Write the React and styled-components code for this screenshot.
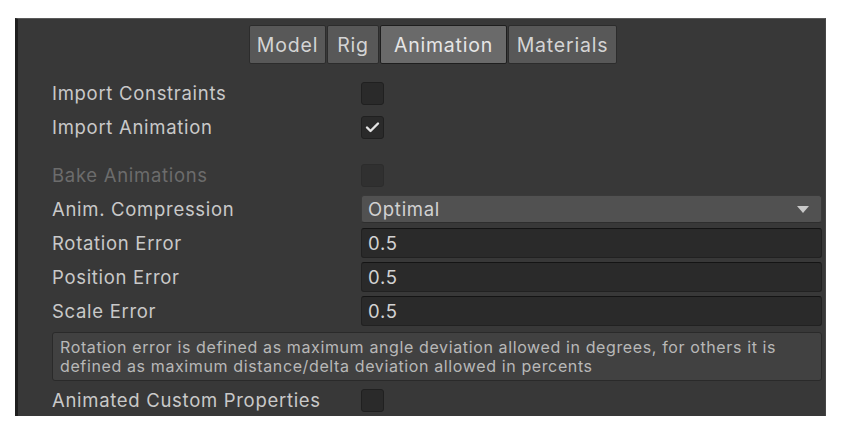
import React from 'react';
import styled, { createGlobalStyle } from 'styled-components';

const GlobalStyle = createGlobalStyle`
  html, body {
    margin: 0;
    padding: 0;
    background: #ffffff;
  }
  body {
    font-family: Inter, "Noto Sans", sans-serif;
  }
`;

const Panel = styled.div`
  box-sizing: border-box;
  margin: 18px 0 0 15px;
  width: 811px;
  height: 398px;
  background: #383838;
  border-top: 1px solid #5a5a5a;
  border-left: 3px solid #1f1f1f;
  border-right: 1px solid #464646;
  overflow: hidden;
  display: flex;
  flex-direction: column;
`;

const TabBar = styled.div`
  display: flex;
  margin: 6px 0 12px 231px;
`;

const Tab = styled.div`
  box-sizing: border-box;
  height: 39px;
  width: ${(p) => p.w}px;
  display: flex;
  align-items: center;
  justify-content: center;
  font-size: 19.5px;
  letter-spacing: 0.8px;
  color: ${(p) => (p.active ? '#e6e6e6' : '#d4d4d4')};
  background: ${(p) => (p.active ? '#6a6a6a' : '#585858')};
  border: 1px solid ${(p) => (p.active ? '#1e1e1e' : '#2c2c2c')};
  margin-right: 1px;
  border-radius: 2px;
`;

const Form = styled.div`
  display: flex;
  flex-direction: column;
  padding: 0 3px 0 34px;
`;

const Row = styled.div`
  display: grid;
  grid-template-columns: 309px 1fr;
  align-items: center;
  height: 34px;
`;

const Spacer = styled.div`
  height: 14px;
`;

const Label = styled.div`
  font-size: 18.5px;
  letter-spacing: 0.7px;
  color: ${(p) => (p.disabled ? '#6c6c6c' : '#c9c9c9')};
  white-space: nowrap;
`;

const Box = styled.div`
  box-sizing: border-box;
  width: 23px;
  height: 23px;
  border-radius: 3px;
  background: ${(p) => (p.disabled ? '#303030' : '#2a2a2a')};
  border: 1px solid ${(p) => (p.disabled ? '#2c2c2c' : '#202020')};
  display: flex;
  align-items: center;
  justify-content: center;
`;

const Dropdown = styled.div`
  box-sizing: border-box;
  height: 28px;
  border-radius: 3px;
  background: #515151;
  border: 1px solid #3a3a3a;
  border-bottom-color: #2e2e2e;
  display: flex;
  align-items: center;
  justify-content: space-between;
  padding: 0 12px 0 6px;
  font-size: 18.5px;
  letter-spacing: 0.7px;
  color: #d2d2d2;
`;

const Arrow = styled.span`
  width: 0;
  height: 0;
  border-left: 6px solid transparent;
  border-right: 6px solid transparent;
  border-top: 7px solid #c8c8c8;
`;

const Input = styled.div`
  box-sizing: border-box;
  height: 30px;
  border-radius: 3px;
  background: #2a2a2a;
  border: 1px solid #212121;
  border-top-color: #141414;
  display: flex;
  align-items: center;
  padding: 0 6px;
  font-size: 18.5px;
  letter-spacing: 0.7px;
  color: #d2d2d2;
`;

const HelpBox = styled.div`
  box-sizing: border-box;
  margin-top: 4px;
  height: 49px;
  border-radius: 3px;
  background: #414141;
  border: 1px solid #2a2a2a;
  padding: 5px 7px 0;
  font-size: 16px;
  letter-spacing: 0.62px;
  line-height: 19px;
  color: #b8b8b8;
`;

const LastRow = styled(Row)`
  margin-top: 2px;
`;

function Check({ checked, disabled }) {
  return (
    <Box disabled={disabled}>
      {checked && (
        <svg width="15" height="12" viewBox="0 0 15 12">
          <path d="M2 6.5 L5.5 10 L13 2.5" fill="none" stroke="#e4e4e4" strokeWidth="2.4" strokeLinecap="round" strokeLinejoin="round" />
        </svg>
      )}
    </Box>
  );
}

export default function App() {
  return (
    <>
      <GlobalStyle />
      <Panel>
        <TabBar>
          <Tab w={77}>Model</Tab>
          <Tab w={52}>Rig</Tab>
          <Tab w={127} active>Animation</Tab>
          <Tab w={109}>Materials</Tab>
        </TabBar>
        <Form>
          <Row>
            <Label>Import Constraints</Label>
            <Check />
          </Row>
          <Row>
            <Label>Import Animation</Label>
            <Check checked />
          </Row>
          <Spacer />
          <Row>
            <Label disabled>Bake Animations</Label>
            <Check disabled />
          </Row>
          <Row>
            <Label>Anim. Compression</Label>
            <Dropdown>
              <span>Optimal</span>
              <Arrow />
            </Dropdown>
          </Row>
          <Row>
            <Label>Rotation Error</Label>
            <Input>0.5</Input>
          </Row>
          <Row>
            <Label>Position Error</Label>
            <Input>0.5</Input>
          </Row>
          <Row>
            <Label>Scale Error</Label>
            <Input>0.5</Input>
          </Row>
          <HelpBox>
            Rotation error is defined as maximum angle deviation allowed in degrees, for others it is
            defined as maximum distance/delta deviation allowed in percents
          </HelpBox>
          <LastRow>
            <Label>Animated Custom Properties</Label>
            <Check />
          </LastRow>
        </Form>
      </Panel>
    </>
  );
}
